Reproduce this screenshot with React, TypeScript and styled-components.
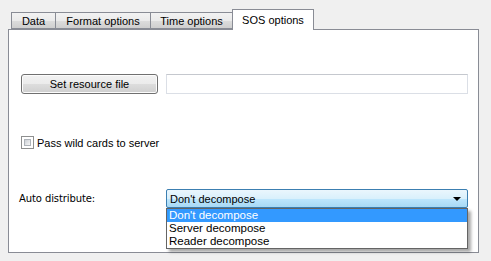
import React from 'react';
import styled, { createGlobalStyle } from 'styled-components';

const GlobalStyle = createGlobalStyle`
  html, body {
    margin: 0;
    padding: 0;
    background: #f0f0f0;
  }
  body {
    font-family: 'Liberation Sans', Arial, sans-serif;
    font-size: 11px;
    color: #000;
  }
`;

const tabs = [
  { label: 'Data', width: 45 },
  { label: 'Format options', width: 96 },
  { label: 'Time options', width: 83 },
  { label: 'SOS options', width: 82 },
];
const activeTab = 3;
const options = ["Don't decompose", 'Server decompose', 'Reader decompose'];

const Dialog = styled.div`
  width: 491px;
  height: 261px;
  padding: 9px 12px 0 8px;
  box-sizing: border-box;
`;

const TabBar = styled.div`
  display: flex;
  align-items: flex-end;
  height: 20px;
  padding-left: 3px;
  position: relative;
  z-index: 1;
`;

const Tab = styled.div<{ $w: number; $active: boolean }>`
  width: ${p => p.$w}px;
  height: ${p => (p.$active ? 21 : 17)}px;
  margin-bottom: ${p => (p.$active ? -1 : 0)}px;
  box-sizing: border-box;
  display: flex;
  align-items: center;
  justify-content: center;
  padding-top: ${p => (p.$active ? 0 : 1)}px;
  border: 1px solid #898c95;
  border-bottom: ${p => (p.$active ? 'none' : '1px solid #898c95')};
  margin-left: -1px;
  background: ${p => (p.$active ? '#fff' : 'linear-gradient(#f2f2f2, #ebebeb 50%, #dddddd 51%, #cfcfcf)')};
  font-size: 11px;
  white-space: nowrap;
  &:first-child {
    margin-left: 0;
  }
`;

const Pane = styled.div`
  width: 471px;
  height: 224px;
  box-sizing: border-box;
  border: 1px solid #898c95;
  background: #fff;
  padding: 43px 10px 0 12px;
  display: flex;
  flex-direction: column;
`;

const Row = styled.div<{ $top?: number }>`
  display: flex;
  align-items: center;
  margin-top: ${p => p.$top ?? 0}px;
  position: relative;
`;

const Button = styled.button`
  width: 137px;
  height: 20px;
  margin-top: 1px;
  box-sizing: border-box;
  border: 1px solid #707070;
  border-radius: 3px;
  background: linear-gradient(#f2f2f2, #ebebeb 50%, #dddddd 51%, #cfcfcf);
  box-shadow: inset 0 0 0 1px #fcfcfc;
  font-family: inherit;
  font-size: 11px;
  color: #000;
  padding: 0;
`;

const TextBox = styled.div`
  width: 302px;
  height: 20px;
  margin-left: 8px;
  box-sizing: border-box;
  border: 1px solid #dbdfe6;
  border-top-color: #c5c8ce;
  background: #fff;
`;

const Check = styled.span`
  width: 13px;
  height: 13px;
  box-sizing: border-box;
  border: 1px solid #8e8f8f;
  background: #fff;
  padding: 2px;
  display: inline-block;
  &::after {
    content: '';
    display: block;
    width: 7px;
    height: 7px;
    background: linear-gradient(135deg, #cbcfd5, #f6f6f6);
    border: 1px solid #aeb3b9;
    box-sizing: border-box;
  }
`;

const CheckLabel = styled.span`
  margin-left: 3px;
`;

const FieldLabel = styled.span`
  width: 147px;
  margin-left: -2px;
  font-family: 'DejaVu Sans', Tahoma, sans-serif;
  font-size: 10px;
  letter-spacing: -0.1px;
`;

const Combo = styled.div`
  width: 302px;
  height: 19px;
  box-sizing: border-box;
  border: 1px solid #3c7fb1;
  border-radius: 2px;
  background: linear-gradient(#eaf6fd, #d9f0fc 50%, #bee6fd 51%, #a7d9f5);
  display: flex;
  align-items: center;
  justify-content: space-between;
  padding: 0 6px 0 3px;
  position: relative;
`;

const Arrow = styled.span`
  width: 0;
  height: 0;
  border-left: 4px solid transparent;
  border-right: 4px solid transparent;
  border-top: 4px solid #000;
`;

const DropList = styled.ul`
  position: absolute;
  top: 18px;
  left: -1px;
  width: 302px;
  margin: 0;
  padding: 0;
  list-style: none;
  box-sizing: border-box;
  border: 1px solid #646464;
  background: #fff;
  box-shadow: 3px 3px 3px rgba(0, 0, 0, 0.35);
  z-index: 2;
`;

const DropItem = styled.li<{ $selected: boolean }>`
  height: 13px;
  line-height: 13px;
  padding-left: 2px;
  font-size: 11.5px;
  background: ${p => (p.$selected ? '#3399ff' : 'transparent')};
  color: ${p => (p.$selected ? '#fff' : '#000')};
`;

export default function App() {
  return (
    <Dialog>
      <GlobalStyle />
      <TabBar>
        {tabs.map((t, i) => (
          <Tab key={t.label} $w={t.width} $active={i === activeTab}>
            {t.label}
          </Tab>
        ))}
      </TabBar>
      <Pane>
        <Row>
          <Button>Set resource file</Button>
          <TextBox />
        </Row>
        <Row $top={42}>
          <Check />
          <CheckLabel>Pass wild cards to server</CheckLabel>
        </Row>
        <Row $top={40}>
          <FieldLabel>Auto distribute:</FieldLabel>
          <Combo>
            <span>{options[0]}</span>
            <Arrow />
            <DropList>
              {options.map((o, i) => (
                <DropItem key={o} $selected={i === 0}>
                  {o}
                </DropItem>
              ))}
            </DropList>
          </Combo>
        </Row>
      </Pane>
    </Dialog>
  );
}
